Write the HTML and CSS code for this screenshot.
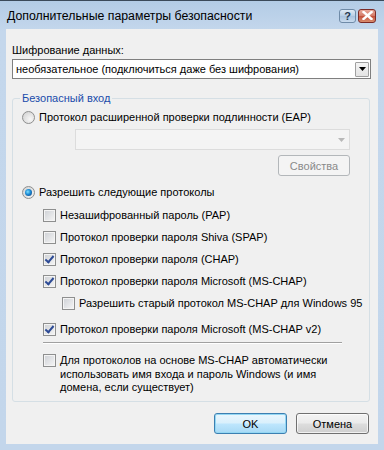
FILE: index.html
```html
<!DOCTYPE html>
<html lang="ru">
<head>
<meta charset="utf-8">
<title>Дополнительные параметры безопасности</title>
<link rel="stylesheet" href="styles.css">
</head>
<body>
<div class="window">
  <div class="titlebar">
    <span class="title">Дополнительные параметры безопасности</span>
    <div class="tbtns">
      <span class="tb help">?</span>
      <span class="tb close"><svg width="11" height="9" viewBox="0 0 11 9"><path d="M1.5 1 L9.5 8 M9.5 1 L1.5 8" stroke="#fff" stroke-width="2.4" stroke-linecap="square"/></svg></span>
    </div>
  </div>
  <div class="client">
    <div class="label">Шифрование данных:</div>
    <div class="combo">
      <span class="combo-text">необязательное (подключиться даже без шифрования)</span>
      <span class="drop"><svg width="7" height="4" viewBox="0 0 7 4"><path d="M0 0 H7 L3.5 4 Z" fill="#000"/></svg></span>
    </div>
    <fieldset class="group">
      <legend>Безопасный вход</legend>
      <label class="row eap"><span class="radio"></span>Протокол расширенной проверки подлинности (EAP)</label>
      <div class="combo disabled"><span class="drop-dis"><svg width="7" height="4" viewBox="0 0 7 4"><path d="M0 0 H7 L3.5 4 Z" fill="#b8b8b8"/></svg></span></div>
      <div class="btnrow"><span class="btn dis">Свойства</span></div>
      <label class="row allow"><span class="radio on"></span>Разрешить следующие протоколы</label>
      <div class="checks">
        <label class="row c1"><span class="cb"></span>Незашифрованный пароль (PAP)</label>
        <label class="row c1"><span class="cb"></span>Протокол проверки пароля Shiva (SPAP)</label>
        <label class="row c1"><span class="cb on"></span>Протокол проверки пароля (CHAP)</label>
        <label class="row c1"><span class="cb on"></span>Протокол проверки пароля Microsoft (MS-CHAP)</label>
        <label class="row c2"><span class="cb"></span>Разрешить старый протокол MS-CHAP для Windows 95</label>
        <label class="row c1 v2"><span class="cb on"></span>Протокол проверки пароля Microsoft (MS-CHAP v2)</label>
      </div>
      <div class="sep"></div>
      <label class="row multi"><span class="cb"></span><span>Для протоколов на основе MS-CHAP автоматически<br>использовать имя входа и пароль Windows (и имя<br>домена, если существует)</span></label>
    </fieldset>
    <div class="buttons">
      <span class="btn def">OK</span>
      <span class="btn">Отмена</span>
    </div>
  </div>
</div>
</body>
</html>
```
FILE: styles.css
```css
html, body { margin: 0; padding: 0; }
body {
  width: 384px; height: 450px; overflow: hidden;
  font-family: "Liberation Sans", Arial, sans-serif;
  font-size: 11px; color: #000;
  background: #24303c;
}
.window {
  width: 384px; height: 450px;
  box-sizing: border-box;
  border-top: 1px solid #3b4a5a;
  background: linear-gradient(#b3cce6, #c4d7ec 30px, #c3d6eb);
  display: flex; flex-direction: column;
}
.titlebar {
  height: 28px; flex: none;
  display: flex; align-items: center; justify-content: space-between;
  padding: 0 8px 0 7px;
}
.title { font-size: 12.3px; color: #000; margin-top: 2px; }
.tbtns { display: flex; gap: 2px; margin-top: 1px; }
.tb {
  width: 17px; height: 14px; box-sizing: border-box;
  border-radius: 3px; display: flex; align-items: center; justify-content: center;
}
.help {
  border: 1px solid #6f8ba8;
  background: linear-gradient(#dfeaf5, #b7cde4 50%, #a9c2de 51%, #c9dbee);
  color: #25384f; font-weight: bold; font-size: 11px;
}
.close {
  width: 18px;
  border: 1px solid #7b2a26;
  background: linear-gradient(#e9a99b, #d27865 50%, #c4503b 51%, #d88d6f);
}
.client {
  flex: 1;
  margin: 0 6px 6px 6px;
  background: #f0f0f0;
  padding: 15px 7px 10px 6px;
  display: flex; flex-direction: column;
}
.label { height: 13px; line-height: 13px; }
.combo {
  margin-top: 2px;
  height: 20px; box-sizing: border-box; flex: none;
  border: 1px solid #7f7f7f; background: #fff;
  display: flex; align-items: center; justify-content: space-between;
  padding: 0 1px 0 3px;
}
.combo-text { line-height: 13px; }
.drop {
  width: 14px; height: 15px; box-sizing: border-box;
  border: 1px solid #a0a0a0; border-radius: 1px;
  background: linear-gradient(#f4f4f4, #e4e4e4);
  display: flex; align-items: center; justify-content: center;
}
.group {
  margin: 13px 1px 0 0; padding: 0;
  border: 1px solid #d5dfe5; border-radius: 3px;
  height: 310px; box-sizing: border-box; flex: none;
}
.group legend {
  margin-left: 7px; padding: 0 2px;
  color: #1a4cab; line-height: 13px;
}
.row { display: flex; align-items: center; height: 16px; line-height: 13px; white-space: nowrap; }
.eap { margin: 4px 0 0 9px; }
.radio {
  width: 13px; height: 13px; box-sizing: border-box; border-radius: 50%;
  border: 1px solid #8e8f8f;
  background: radial-gradient(circle at 65% 65%, #f7f7f7, #d6d6d6 80%);
  margin-right: 4px; flex: none; position: relative;
}
.radio.on::after {
  content: ""; position: absolute; left: 2px; top: 2px;
  width: 7px; height: 7px; border-radius: 50%;
  background: radial-gradient(circle at 40% 40%, #7ee0ff, #1a8ad4 45%, #12306e 100%);
}
.combo.disabled {
  margin: 4px 19px 0 62px; height: 21px;
  border-color: #dcdcdc; background: #f4f4f4;
  justify-content: flex-end; padding-right: 4px;
}
.drop-dis { display: flex; }
.btnrow { display: flex; justify-content: flex-end; margin: 5px 19px 0 0; }
.btn {
  height: 21px; width: 73px; box-sizing: border-box;
  border: 1px solid #707070; border-radius: 3px;
  background: linear-gradient(#f3f3f3, #ebebeb 48%, #dddddd 52%, #cfcfcf);
  display: flex; align-items: center; justify-content: center;
  box-shadow: inset 0 0 0 1px rgba(255,255,255,0.7);
}
.btn.dis {
  width: 72px; border-color: #b3b7ba; background: #f4f4f4; color: #8a8a8a;
  box-shadow: none;
}
.btn.def {
  border-color: #3c7fb1;
  box-shadow: inset 0 0 0 1px #94d7f3;
  background: linear-gradient(#eaf6fd, #d9f0fc 48%, #bee6fd 52%, #a7d9f5);
}
.allow { margin: 8px 0 0 9px; }
.checks { display: flex; flex-direction: column; margin-top: 4px; }
.checks .row { height: 22px; }
.c1 { padding-left: 30px; }
.c2 { padding-left: 49px; height: 23px !important; }
.v2 { height: 25px !important; padding-top: 2px; }
.cb {
  width: 13px; height: 13px; box-sizing: border-box;
  border: 1px solid #8e8f8f;
  background: linear-gradient(135deg, #cdd0d5, #f6f6f6);
  box-shadow: inset 0 0 0 1px #f4f4f4;
  margin-right: 4px; flex: none; position: relative;
}
.cb.on::after {
  content: ""; position: absolute; left: 3px; top: 0px;
  width: 3px; height: 7px;
  border: solid #2c4a95; border-width: 0 2px 2px 0;
  transform: rotate(40deg);
}
.sep {
  margin: 0 27px 0 30px;
  border-top: 1px solid #a0a0a0; border-bottom: 1px solid #fff;
}
.multi {
  height: auto; align-items: flex-start; padding-left: 30px;
  margin-top: 10px; line-height: 13.5px;
}
.multi .cb { margin-top: 0; }
.buttons {
  display: flex; justify-content: flex-end; gap: 9px;
  margin: auto 2px 0 0;
}
.buttons .btn { height: 21px; }
```
